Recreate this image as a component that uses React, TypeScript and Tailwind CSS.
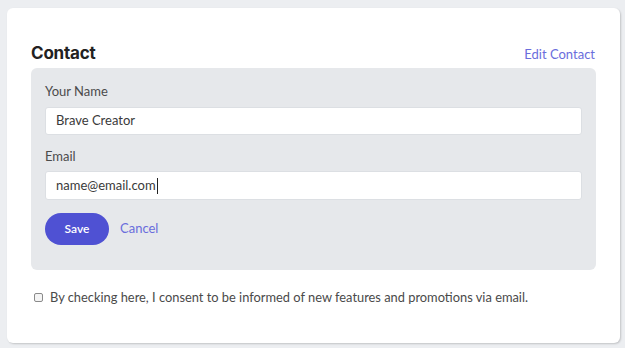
export default function App() {
  return (
    <div className="min-h-[348px] w-full bg-[#eceef1] pl-[7px] pr-[5px] pt-[8px] pb-[5px] font-['Lato','Noto_Sans',sans-serif]">
      <div className="flex h-[335px] flex-col rounded-[6px] bg-white px-[24px] pt-[35px] shadow-[1px_1px_2px_rgba(0,0,0,0.18)]">
        <div className="flex items-end justify-between">
          <h2 className="text-[17px] font-bold leading-[20px] tracking-[-0.2px] text-[#222] font-['Inter',sans-serif]">
            Contact
          </h2>
          <a className="mr-[1px] text-[13px] leading-[18px] text-[#6a6ddc]">Edit Contact</a>
        </div>

        <div className="mt-[5px] flex h-[202px] flex-col rounded-[6px] bg-[#e6e8eb] px-[14px] pt-[14px]">
          <label className="text-[13px] leading-[18px] text-[#4b4b4b]">Your Name</label>
          <div className="mt-[7px] flex h-[28px] items-center rounded-[3px] border border-[#dcdfe3] bg-white px-[10px] text-[13px] text-[#3a3a3a]">
            Brave Creator
          </div>
          <label className="mt-[12px] text-[13px] leading-[18px] text-[#4b4b4b]">Email</label>
          <div className="mt-[6px] flex h-[29px] items-center rounded-[3px] border border-[#dcdfe3] bg-white px-[10px] text-[13px] text-[#3a3a3a]">
            name@email.com
            <span className="ml-[1px] inline-block h-[16px] w-[1px] bg-[#222]" />
          </div>
          <div className="mt-[13px] flex items-center gap-[11px]">
            <button className="h-[32px] w-[64px] rounded-full bg-[#4f51d3] text-[12px] font-semibold text-white">
              Save
            </button>
            <a className="text-[13px] text-[#6a6ddc]">Cancel</a>
          </div>
        </div>

        <label className="mt-[18px] flex items-center gap-[7px] pl-[3px] text-[12.85px] text-[#4a4a4a]">
          <span className="inline-block h-[9px] w-[9px] rounded-[2px] border border-[#8a8a8a] bg-[#f4f4f4]" />
          By checking here, I consent to be informed of new features and promotions via email.
        </label>
      </div>
    </div>
  );
}
